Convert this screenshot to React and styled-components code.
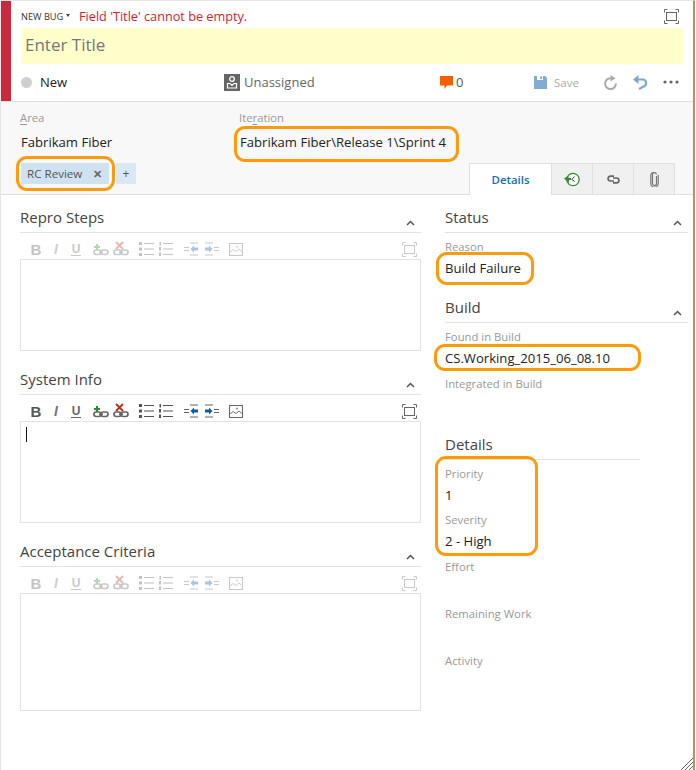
import styled, { createGlobalStyle } from "styled-components";

const GlobalStyle = createGlobalStyle`
	html, body {
		margin: 0;
		padding: 0;
		background: #fff;
	}
	* {
		box-sizing: border-box;
	}
`;

const FONT = `"Open Sans", "Noto Sans", "Liberation Sans", sans-serif`;

const Page = styled.div`
	position: relative;
	width: 695px;
	height: 770px;
	overflow: hidden;
	display: flex;
	flex-direction: column;
	font-family: ${FONT};
	font-size: 13px;
	color: #222;
	background: #fff;
	border-top: 1px solid #e6e6e6;
	border-left: 1px solid #e6e6e6;
	border-right: 2px solid #b8925c;
`;

const Header = styled.header`
	display: flex;
	height: 101px;
	flex-shrink: 0;
	border-bottom: 1px solid #e0e0e0;
`;

const RedBar = styled.div`
	width: 10px;
	background: #cc293d;
`;

const HeaderBody = styled.div`
	flex: 1;
	padding: 0 9px 0 10px;
	display: flex;
	flex-direction: column;
`;

const TypeRow = styled.div`
	height: 27px;
	display: flex;
	align-items: center;
	padding-top: 3px;
`;

const TypeName = styled.span`
	width: 58px;
	display: flex;
	align-items: flex-start;
	gap: 3px;
	font-size: 9.2px;
	color: #333;
	white-space: nowrap;
`;

const TypeCaret = styled.i`
	margin-top: 4px;
	border-left: 2px solid transparent;
	border-right: 2px solid transparent;
	border-top: 3px solid #444;
`;

const ErrorText = styled.span`
	flex: 1;
	font-size: 12.7px;
	color: #e0202f;
`;

const ExpandSlot = styled.div`
	display: flex;
	padding-right: 5px;
`;

const TitleInput = styled.div`
	height: 36px;
	display: flex;
	align-items: center;
	padding: 0 0 3px 4px;
	background: #ffffcc;
	font-size: 17px;
	color: #777;
`;

const StatusRow = styled.div`
	flex: 1;
	display: flex;
	align-items: center;
	padding-bottom: 1px;
`;

const StatusCell = styled.div`
	width: ${(props) => props.$width}px;
	display: flex;
	align-items: center;
	gap: ${(props) => props.$gap || 0}px;
	color: ${(props) => props.$color || "#222"};
	font-size: ${(props) => props.$size || 13}px;
`;

const StateDot = styled.span`
	width: 11px;
	height: 11px;
	border-radius: 50%;
	background: #cfcfcf;
`;

const Band = styled.section`
	height: 93px;
	flex-shrink: 0;
	background: #f8f8f8;
	border-bottom: 1px solid #e0e0e0;
	padding: 8px 18px 0 19px;
	display: flex;
	flex-direction: column;
`;

const BandFields = styled.div`
	display: flex;
	height: 53px;
`;

const BandField = styled.div`
	width: ${(props) => props.$width}px;
`;

const BandBottom = styled.div`
	display: flex;
	justify-content: space-between;
	align-items: flex-start;
	flex: 1;
`;

const Label = styled.div`
	height: 17px;
	line-height: 15px;
	font-size: 11.3px;
	color: #999;
	white-space: nowrap;
	u {
		text-underline-offset: 2px;
	}
`;

const Value = styled.div`
	height: 24px;
	line-height: 24px;
	font-size: 13.1px;
	color: #222;
	white-space: nowrap;
`;

const BandValue = styled(Value)`
	margin-top: 3px;
	padding-left: 1px;
`;

const Marked = styled.div`
	position: relative;
	display: ${(props) => (props.$block ? "block" : "inline-block")};
`;

const Callout = styled.span`
	position: absolute;
	inset: ${(props) => props.$inset};
	border: 3px solid #ff9a0d;
	border-radius: 11px;
	pointer-events: none;
`;

const Tags = styled.div`
	display: flex;
	gap: 7px;
	padding-left: 1px;
`;

const Tag = styled.div`
	width: 88px;
	height: 21px;
	padding: 0 6px;
	display: flex;
	align-items: center;
	justify-content: space-between;
	background: #cfe2f1;
	color: #555;
	font-size: 11.6px;
`;

const TagClose = styled.span`
	font-size: 11px;
	font-weight: 700;
	color: #666;
	padding-right: 1px;
`;

const AddTag = styled.div`
	width: 20px;
	height: 21px;
	display: flex;
	align-items: center;
	justify-content: center;
	background: #d9e8f4;
	color: #555;
	font-size: 12px;
`;

const Tabs = styled.div`
	display: flex;
	height: 32px;
	margin-bottom: -1px;
`;

const Tab = styled.div`
	width: ${(props) => (props.$active ? 83 : 41)}px;
	display: flex;
	align-items: center;
	justify-content: center;
	font-size: 11.4px;
	font-weight: 600;
	color: #106ebe;
	background: ${(props) => (props.$active ? "#fff" : "#f0f0f0")};
	border-top: 1px solid #e0e0e0;
	border-right: 1px solid #e0e0e0;
	border-left: ${(props) => (props.$active ? "1px solid #e0e0e0" : "none")};
	border-bottom: ${(props) => (props.$active ? "none" : "1px solid #e0e0e0")};
`;

const Main = styled.main`
	flex: 1;
	display: grid;
	grid-template-columns: 401px 243px;
	column-gap: 24px;
	align-content: start;
	padding: 10px 0 0 19px;
`;

const Column = styled.div`
	display: flex;
	flex-direction: column;
`;

const Section = styled.section`
	margin-bottom: ${(props) => props.$after || 0}px;
`;

const SectionHeader = styled.div`
	height: 28px;
	width: ${(props) => (props.$width ? `${props.$width}px` : "auto")};
	display: flex;
	justify-content: space-between;
	border-bottom: 1px solid #e3e3e3;
`;

const SectionTitle = styled.h3`
	margin: 0;
	font-size: 15px;
	font-weight: 400;
	line-height: 24px;
	color: #444;
`;

const Chevron = styled.svg`
	width: 9px;
	height: 6px;
	margin: 15px 6px 0 0;
	fill: none;
	stroke: #555;
	stroke-width: 1.5;
`;

const Toolbar = styled.div`
	display: flex;
	align-items: center;
	height: 26px;
	padding: 7px 2px 1px 6px;
	opacity: ${(props) => (props.$disabled ? 0.35 : 1)};
`;

const ToolGroup = styled.div`
	display: flex;
	margin-right: 5px;
`;

const ToolSpacer = styled.div`
	flex: 1;
`;

const Tool = styled.div`
	width: 20px;
	height: 18px;
	display: flex;
	align-items: center;
	justify-content: center;
	color: #555;
	font-family: "Liberation Sans", sans-serif;
	font-size: 14px;
`;

const BoldGlyph = styled.span`
	font-weight: 700;
	font-size: 15px;
`;

const ItalicGlyph = styled.span`
	font-style: italic;
	font-weight: 700;
	color: #777;
`;

const UnderGlyph = styled.span`
	font-size: 12px;
	font-weight: 700;
	color: #666;
	border-bottom: 1px solid #666;
	line-height: 12px;
	padding: 0 1px;
`;

const Editor = styled.div`
	height: ${(props) => props.$height}px;
	border: 1px solid #e3e3e3;
	padding: 5px;
`;

const Caret = styled.div`
	width: 1px;
	height: 15px;
	background: #111;
`;

const FieldList = styled.div`
	padding-top: 6px;
`;

const Field = styled.div`
	height: ${(props) => props.$height || 47}px;
`;

const Grip = styled.svg`
	position: absolute;
	right: 0;
	bottom: 0;
	width: 14px;
	height: 14px;
	stroke: #666;
	stroke-width: 1;
`;

const ExpandIcon = ({ color = "#666" }) => (
	<svg width="15" height="15" viewBox="0 0 15 15" fill="none" stroke={color}>
		<path d="M.5 3.5v-3h3M11.500.5h3v3M14.500 11.500v3h-3M3.500 14.500h-3v-3" />
		<rect x="2.500" y="3.500" width="10" height="8" />
	</svg>
);

const AvatarIcon = () => (
	<svg width="16" height="17" viewBox="0 0 16 17">
		<rect width="16" height="17" fill="#666" />
		<circle cx="8" cy="5" r="2.300" fill="none" stroke="#fff" strokeWidth="1.300" />
		<path d="M3.500 9.500H6L8 11.500 10 9.500h2.500V14h-9z" fill="none" stroke="#fff" strokeWidth="1.200" />
	</svg>
);

const CommentIcon = () => (
	<svg width="13" height="13" viewBox="0 0 13 13">
		<path d="M0 0h13v9.500H7L4.500 13V9.500H0z" fill="#f65e00" />
	</svg>
);

const SaveIcon = () => (
	<svg width="13" height="13" viewBox="0 0 13 13">
		<path d="M0 0h3v4h6V0h2l2 2v11H0z" fill="#82acd3" />
		<rect x="6" y=".5" width="2" height="2.500" fill="#82acd3" />
	</svg>
);

const RefreshIcon = () => (
	<svg width="15" height="15" viewBox="0 0 15 15" fill="none">
		<path d="M7.500 3.200A5.400 5.400 0 1 0 12.900 8.600" stroke="#aaa" strokeWidth="2" />
		<path d="M7.500 0 12.500 3.200 7.500 6.500z" fill="#aaa" />
	</svg>
);

const UndoIcon = () => (
	<svg width="14" height="15" viewBox="0 0 14 15" fill="none">
		<path d="M3 4.500h6a3.600 3.600 0 0 1 1 7.200L6 14" stroke="#7aa9d6" strokeWidth="2.200" />
		<path d="M5.500 0 0 4.500 5.500 9z" fill="#7aa9d6" />
	</svg>
);

const MoreIcon = () => (
	<svg width="16" height="4" viewBox="0 0 16 4" fill="#666">
		<circle cx="2" cy="2" r="1.600" />
		<circle cx="8" cy="2" r="1.600" />
		<circle cx="14" cy="2" r="1.600" />
	</svg>
);

const HistoryIcon = () => (
	<svg width="16" height="15" viewBox="0 0 16 15" fill="none">
		<circle cx="9" cy="7.500" r="6.200" fill="#fff" stroke="#2f8f2f" strokeWidth="1.300" />
		<path d="M10.500 4.500 7.800 7.500l3 2" stroke="#444" />
		<path d="M0 6.500 4.500 3.500v2.500H7v2H5v3z" fill="#2f8f2f" />
	</svg>
);

const LinkIcon = () => (
	<svg width="13" height="9" viewBox="0 0 13 9" fill="none" stroke="#666" strokeWidth="1.700">
		<path d="M7 1.200H3.500a2.400 2.400 0 0 0 0 4.800H7" />
		<path d="M6 3h3.500a2.400 2.400 0 0 1 0 4.800H6" />
	</svg>
);

const ClipIcon = () => (
	<svg width="9" height="15" viewBox="0 0 9 15" fill="none" stroke="#777" strokeWidth="1.200">
		<path d="M6.500 4v7.500a2 2 0 0 1-4 0V2.600a1.900 1.900 0 0 1 3.800 0" />
		<path d="M8.200 3v8.500a3.700 3.700 0 0 1-7.400 0V3a2.600 2.600 0 0 1 3-2.400" />
	</svg>
);

const Chain = () => (
	<g fill="none" stroke="#666" strokeWidth="1.700">
		<rect x="1" y="10" width="7" height="4.500" rx="2.200" />
		<rect x="8" y="10" width="7" height="4.500" rx="2.200" />
		<path d="M6 12.200h4" />
	</g>
);

const AddLinkIcon = () => (
	<svg width="16" height="18" viewBox="0 0 16 18">
		<Chain />
		<path d="M1 6h2V4h2v2h2v2H5v2H3V8H1z" fill="#2e8b2e" />
	</svg>
);

const RemoveLinkIcon = () => (
	<svg width="16" height="18" viewBox="0 0 16 18">
		<Chain />
		<path d="M3 2l7 7M10 2 3 9" stroke="#b8321f" strokeWidth="1.800" />
	</svg>
);

const BulletIcon = () => (
	<svg width="15" height="14" viewBox="0 0 15 14" fill="#555">
		<rect y="0" width="3" height="3" />
		<rect y="5.500" width="3" height="3" />
		<rect y="11" width="3" height="3" />
		<rect x="5" y="1" width="10" height="1" />
		<rect x="5" y="6.500" width="10" height="1" />
		<rect x="5" y="12" width="10" height="1" />
	</svg>
);

const NumberIcon = () => (
	<svg width="15" height="14" viewBox="0 0 15 14" fill="#555">
		<rect x=".5" y="0" width="1.500" height="3.500" />
		<rect y="5" width="2" height="3.500" />
		<rect y="10.500" width="2" height="3.500" />
		<rect x="4" y="1" width="10" height="1" />
		<rect x="4" y="6.500" width="10" height="1" />
		<rect x="4" y="12" width="10" height="1" />
	</svg>
);

const OutdentIcon = ({ flip }) => (
	<svg width="15" height="14" viewBox="0 0 15 14">
		<g transform={flip ? "translate(15 0) scale(-1 1)" : undefined}>
			<path d="M6 1h8M0 5.500h5M0 8.500h5M6 13h8" stroke="#666" strokeWidth="1.200" />
			<path d="M6.500 7 10 3.500v2h4v3h-4v2z" fill="#0b5cad" />
		</g>
	</svg>
);

const ImageIcon = () => (
	<svg width="14" height="13" viewBox="0 0 14 13" fill="none" stroke="#666">
		<rect x=".5" y=".5" width="13" height="12" />
		<path d="M1 9l3-2.500 3 2 3-2.500 3 2.500" strokeWidth=".9" />
		<circle cx="8" cy="3.500" r="1" fill="#888" stroke="none" />
	</svg>
);

const RichToolbar = ({ disabled }) => (
	<Toolbar $disabled={disabled}>
		<ToolGroup>
			<Tool>
				<BoldGlyph>B</BoldGlyph>
			</Tool>
			<Tool>
				<ItalicGlyph>I</ItalicGlyph>
			</Tool>
			<Tool>
				<UnderGlyph>U</UnderGlyph>
			</Tool>
		</ToolGroup>
		<ToolGroup>
			<Tool>
				<AddLinkIcon />
			</Tool>
			<Tool>
				<RemoveLinkIcon />
			</Tool>
		</ToolGroup>
		<ToolGroup>
			<Tool>
				<BulletIcon />
			</Tool>
			<Tool>
				<NumberIcon />
			</Tool>
		</ToolGroup>
		<ToolGroup>
			<Tool>
				<OutdentIcon />
			</Tool>
			<Tool>
				<OutdentIcon flip />
			</Tool>
		</ToolGroup>
		<Tool>
			<ImageIcon />
		</Tool>
		<ToolSpacer />
		<Tool>
			<ExpandIcon />
		</Tool>
	</Toolbar>
);

const Collapse = () => (
	<Chevron viewBox="0 0 9 6">
		<path d="M1 5l3.500-3.500L8 5" />
	</Chevron>
);

const RichSection = ({ title, height, after, disabled, children }) => (
	<Section $after={after}>
		<SectionHeader>
			<SectionTitle>{title}</SectionTitle>
			<Collapse />
		</SectionHeader>
		<RichToolbar disabled={disabled} />
		<Editor $height={height}>{children}</Editor>
	</Section>
);

const App = () => {
	return (
		<Page>
			<GlobalStyle />
			<Header>
				<RedBar />
				<HeaderBody>
					<TypeRow>
						<TypeName>
							NEW BUG
							<TypeCaret />
						</TypeName>
						<ErrorText>Field 'Title' cannot be empty.</ErrorText>
						<ExpandSlot>
							<ExpandIcon />
						</ExpandSlot>
					</TypeRow>
					<TitleInput>Enter Title</TitleInput>
					<StatusRow>
						<StatusCell $width={203} $gap={8}>
							<StateDot />
							New
						</StatusCell>
						<StatusCell $width={216} $gap={4} $color="#666">
							<AvatarIcon />
							Unassigned
						</StatusCell>
						<StatusCell $width={94} $gap={3} $color="#555">
							<CommentIcon />0
						</StatusCell>
						<StatusCell $width={69} $gap={7} $color="#aaa" $size={11.5}>
							<SaveIcon />
							Save
						</StatusCell>
						<StatusCell $width={30}>
							<RefreshIcon />
						</StatusCell>
						<StatusCell $width={30}>
							<UndoIcon />
						</StatusCell>
						<StatusCell $width={16}>
							<MoreIcon />
						</StatusCell>
					</StatusRow>
				</HeaderBody>
			</Header>
			<Band>
				<BandFields>
					<BandField $width={219}>
						<Label>
							<u>A</u>rea
						</Label>
						<BandValue>Fabrikam Fiber</BandValue>
					</BandField>
					<BandField $width={300}>
						<Label>
							Ite<u>r</u>ation
						</Label>
						<Marked>
							<BandValue>Fabrikam Fiber\Release 1\Sprint 4</BandValue>
							<Callout $inset="-1px -13px -8px -5px" />
						</Marked>
					</BandField>
				</BandFields>
				<BandBottom>
					<Tags>
						<Marked>
							<Tag>
								RC Review
								<TagClose>✕</TagClose>
							</Tag>
							<Callout $inset="-7px -6px -7px -5px" />
						</Marked>
						<AddTag>+</AddTag>
					</Tags>
					<Tabs>
						<Tab $active>Details</Tab>
						<Tab>
							<HistoryIcon />
						</Tab>
						<Tab>
							<LinkIcon />
						</Tab>
						<Tab>
							<ClipIcon />
						</Tab>
					</Tabs>
				</BandBottom>
			</Band>
			<Main>
				<Column>
					<RichSection title="Repro Steps" height={92} after={16} disabled />
					<RichSection title="System Info" height={102} after={16}>
						<Caret />
					</RichSection>
					<RichSection title="Acceptance Criteria" height={118} disabled />
				</Column>
				<Column>
					<Section $after={9}>
						<SectionHeader>
							<SectionTitle>Status</SectionTitle>
							<Collapse />
						</SectionHeader>
						<FieldList>
							<Field>
								<Label>Reason</Label>
								<Marked>
									<Value>Build Failure</Value>
									<Callout $inset="-4px -13px -5px -9px" />
								</Marked>
							</Field>
						</FieldList>
					</Section>
					<Section $after={9}>
						<SectionHeader>
							<SectionTitle>Build</SectionTitle>
							<Collapse />
						</SectionHeader>
						<FieldList>
							<Field>
								<Label>Found in Build</Label>
								<Marked>
									<Value>CS.Working_2015_06_08.10</Value>
									<Callout $inset="-2px -31px -1px -11px" />
								</Marked>
							</Field>
							<Field>
								<Label>Integrated in Build</Label>
							</Field>
						</FieldList>
					</Section>
					<Section>
						<SectionHeader $width={195}>
							<SectionTitle>Details</SectionTitle>
						</SectionHeader>
						<FieldList>
							<Marked $block>
								<Field $height={46}>
									<Label>Priority</Label>
									<Value>1</Value>
								</Field>
								<Field>
									<Label>Severity</Label>
									<Value>2 - High</Value>
								</Field>
								<Callout $inset="-10px 150px 3px -10px" />
							</Marked>
							<Field>
								<Label>Effort</Label>
							</Field>
							<Field>
								<Label>Remaining Work</Label>
							</Field>
							<Field>
								<Label>Activity</Label>
							</Field>
						</FieldList>
					</Section>
				</Column>
			</Main>
			<Grip viewBox="0 0 14 14">
				<path d="M2 14 14 2M6 14l8-8M10 14l4-4" />
			</Grip>
		</Page>
	);
};

export default App;
